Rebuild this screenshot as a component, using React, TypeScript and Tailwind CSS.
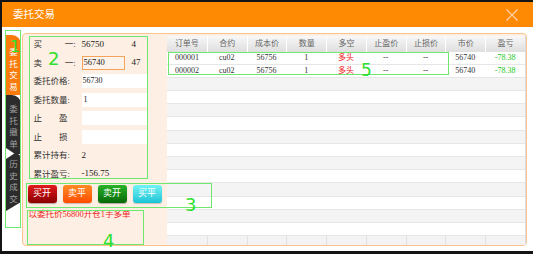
import { ReactNode } from "react";

const font = "font-['Liberation_Serif','Noto_Sans_CJK_SC',serif]";

const columns = ["订单号", "合约", "成本价", "数量", "多空", "止盈价", "止损价", "市价", "盈亏"];

const orders = [
  ["000001", "cu02", "56756", "1", "多头", "--", "--", "56740", "-78.38"],
  ["000002", "cu02", "56756", "1", "多头", "--", "--", "56740", "-78.38"],
];

const Row = ({ label, children }: { label: ReactNode; children?: ReactNode }) => (
  <div className="flex h-[18.5px] items-center">
    <div className="w-[48px] text-[8.5px] leading-none text-[#333]">{label}</div>
    {children}
  </div>
);

const Spread = ({ a, b, w }: { a: string; b: string; w: string }) => (
  <div className={`flex justify-between ${w}`}>
    <span>{a}</span>
    <span>{b}</span>
  </div>
);

const Tab = ({ text, className }: { text: string; className: string }) => (
  <div className={`flex w-[15px] flex-col items-center text-[8.5px] leading-[11.5px] ${className}`}>
    {text.split("").map((c, i) => (
      <span key={i}>{c}</span>
    ))}
  </div>
);

const Note = ({ className, n, numClass }: { className: string; n: string; numClass: string }) => (
  <>
    <div className={`pointer-events-none absolute border-[1.5px] border-[#6ee86e] ${className}`} />
    <div
      className={`pointer-events-none absolute font-['DejaVu_Sans',sans-serif] leading-none text-[#2fe02f] ${numClass}`}
    >
      {n}
    </div>
  </>
);

export default function App() {
  return (
    <div className={`relative flex h-[254px] w-[533px] flex-col bg-[#141414] pb-[3px] pl-[2px] pt-[2px] ${font}`}>
      <div className="flex flex-1 flex-col bg-white">
        {/* title bar */}
        <div className="flex h-[25px] items-center justify-between bg-[#fe8903] pl-[11px] pr-[15px]">
          <span className="text-[10.5px] text-white">委托交易</span>
          <svg width="12" height="12" viewBox="0 0 12 12">
            <path d="M0.5 0.5L11.5 11.5M11.5 0.5L0.5 11.5" stroke="#ffd9b3" strokeWidth="1.1" />
          </svg>
        </div>

        <div className="flex flex-1 pb-[5px] pr-[6px] pt-[6px]">
          {/* side tabs */}
          <div className="flex w-[20px] flex-col pl-[4px] pt-[2px]">
            <Tab text="委托交易" className="h-[60px] rounded-tr-[9px] bg-[#f97b0c] pt-[12px] text-white" />
            <Tab
              text="委托撤单"
              className="h-[59px] rounded-tr-[9px] bg-[#2c2c2c] pt-[9px] text-[#a0a0a0] [clip-path:polygon(0_0,100%_0,100%_100%,60%_100%,0_calc(100%-6px))]"
            />
            <Tab
              text="历史成交"
              className="-mt-[1px] h-[58px] rounded-tr-[6px] bg-[#2c2c2c] pt-[6px] text-[#a0a0a0] [clip-path:polygon(0_6px,60%_0,100%_0,100%_calc(100%-9px),0_100%)]"
            />
          </div>

          {/* main panel */}
          <div className="flex flex-1 rounded-[4px] border-[1.5px] border-[#fbc48c] bg-[#fdefe3]">
            {/* order form */}
            <div className="flex w-[144px] flex-col pl-[4.5px] pt-[1px]">
              <div className="flex flex-col pl-[6px]">
                <Row label={<Spread a="买" b="一:" w="w-[42px]" />}>
                  <span className="w-[50px] text-[9px] text-[#222]">56750</span>
                  <span className="text-[9px] text-[#222]">4</span>
                </Row>
                <Row label={<Spread a="卖" b="一:" w="w-[42px]" />}>
                  <div className="flex h-[14px] w-[43px] items-center border border-[#f3a35b] bg-[#fdf3ea] pl-[1px] text-[8.5px] text-[#222]">
                    56740
                  </div>
                  <span className="ml-[7px] text-[9px] text-[#222]">47</span>
                </Row>
                <Row label="委托价格:">
                  <div className="flex h-[14px] w-[65px] items-center bg-white pl-[1px] text-[8px] text-[#222]">56730</div>
                </Row>
                <Row label="委托数量:">
                  <div className="flex h-[14px] w-[65px] items-center bg-white pl-[2px] text-[8px] text-[#222]">1</div>
                </Row>
                <Row label={<Spread a="止" b="盈" w="w-[34px]" />}>
                  <div className="h-[14px] w-[65px] bg-white" />
                </Row>
                <Row label={<Spread a="止" b="损" w="w-[34px]" />}>
                  <div className="h-[14px] w-[65px] bg-white" />
                </Row>
                <Row label="累计持有:">
                  <span className="text-[9px] text-[#222]">2</span>
                </Row>
                <Row label="累计盈亏:">
                  <span className="text-[9px] text-[#222]">-156.75</span>
                </Row>
              </div>

              <div className="mt-[2px] flex h-[18px] gap-[6px] text-[9px] text-white">
                <button className="w-[29px] rounded-[3px] bg-gradient-to-b from-[#e21b1b] to-[#8c0000] shadow-[0_1px_1px_rgba(0,0,0,0.3)]">
                  买开
                </button>
                <button className="w-[29px] rounded-[3px] bg-gradient-to-b from-[#ff8a22] to-[#ff4a00] shadow-[0_1px_1px_rgba(0,0,0,0.2)]">
                  卖平
                </button>
                <button className="w-[29px] rounded-[3px] bg-gradient-to-b from-[#27b327] to-[#076a07] shadow-[0_1px_1px_rgba(0,0,0,0.3)]">
                  卖开
                </button>
                <button className="w-[29px] rounded-[3px] bg-gradient-to-b from-[#6ff4f4] to-[#0fc3d6] shadow-[0_1px_1px_rgba(0,0,0,0.2)]">
                  买平
                </button>
              </div>

              <div className="mt-[6px] pl-[1px] text-[8.5px] leading-[10px] text-[#ee1c1c]">以委托价56800开仓1手多单</div>
            </div>

            {/* orders table */}
            <div className="flex flex-1 flex-col pt-[1.5px]">
              <div className="flex flex-1 flex-col border-r border-[#dcdcdc] bg-white">
                <div className="grid h-[16px] grid-cols-9 bg-gradient-to-b from-[#f8f8f8] to-[#dedede]">
                  {columns.map((c, i) => (
                    <div
                      key={c}
                      className={`flex items-center justify-center text-[8px] text-[#666] ${i > 0 ? "border-l border-white" : ""}`}
                    >
                      {c}
                    </div>
                  ))}
                </div>
                {Array.from({ length: 14 }).map((_, r) => {
                  const data = orders[r];
                  return (
                    <div
                      key={r}
                      className={`grid h-[13.2px] grid-cols-9 border-b border-[#e6e6e6] ${
                        r >= 2 && r % 2 === 0 ? "bg-[#f4f4f4]" : "bg-white"
                      }`}
                    >
                      {data &&
                        data.map((v, i) => (
                          <div
                            key={i}
                            className={`flex items-center justify-center text-[8px] ${
                              i === 4 ? "text-[#f02020]" : i === 8 ? "text-[#18c818]" : "text-[#333]"
                            }`}
                          >
                            {v}
                          </div>
                        ))}
                    </div>
                  );
                })}
                <div className="grid flex-1 grid-cols-9 bg-[#f3f3f3]">
                  {columns.map((c, i) => (
                    <div key={c} className={i > 0 ? "border-l border-[#e2e2e2]" : ""} />
                  ))}
                </div>
              </div>
            </div>
          </div>
        </div>
      </div>

      {/* annotation overlays */}
      <Note className="left-[5px] top-[30px] h-[198px] w-[16px]" n="1" numClass="left-[10px] top-[39px] text-[16px]" />
      <Note className="left-[29px] top-[36px] h-[143px] w-[119px]" n="2" numClass="left-[48px] top-[50px] text-[18px]" />
      <Note className="left-[26px] top-[183px] h-[25px] w-[186px]" n="3" numClass="left-[185px] top-[196px] text-[18px]" />
      <Note className="left-[27px] top-[210px] h-[35px] w-[117px]" n="4" numClass="left-[103px] top-[232px] text-[18px]" />
      <Note className="left-[168px] top-[52px] h-[23px] w-[281px]" n="5" numClass="left-[361px] top-[62px] text-[17px]" />
    </div>
  );
}
